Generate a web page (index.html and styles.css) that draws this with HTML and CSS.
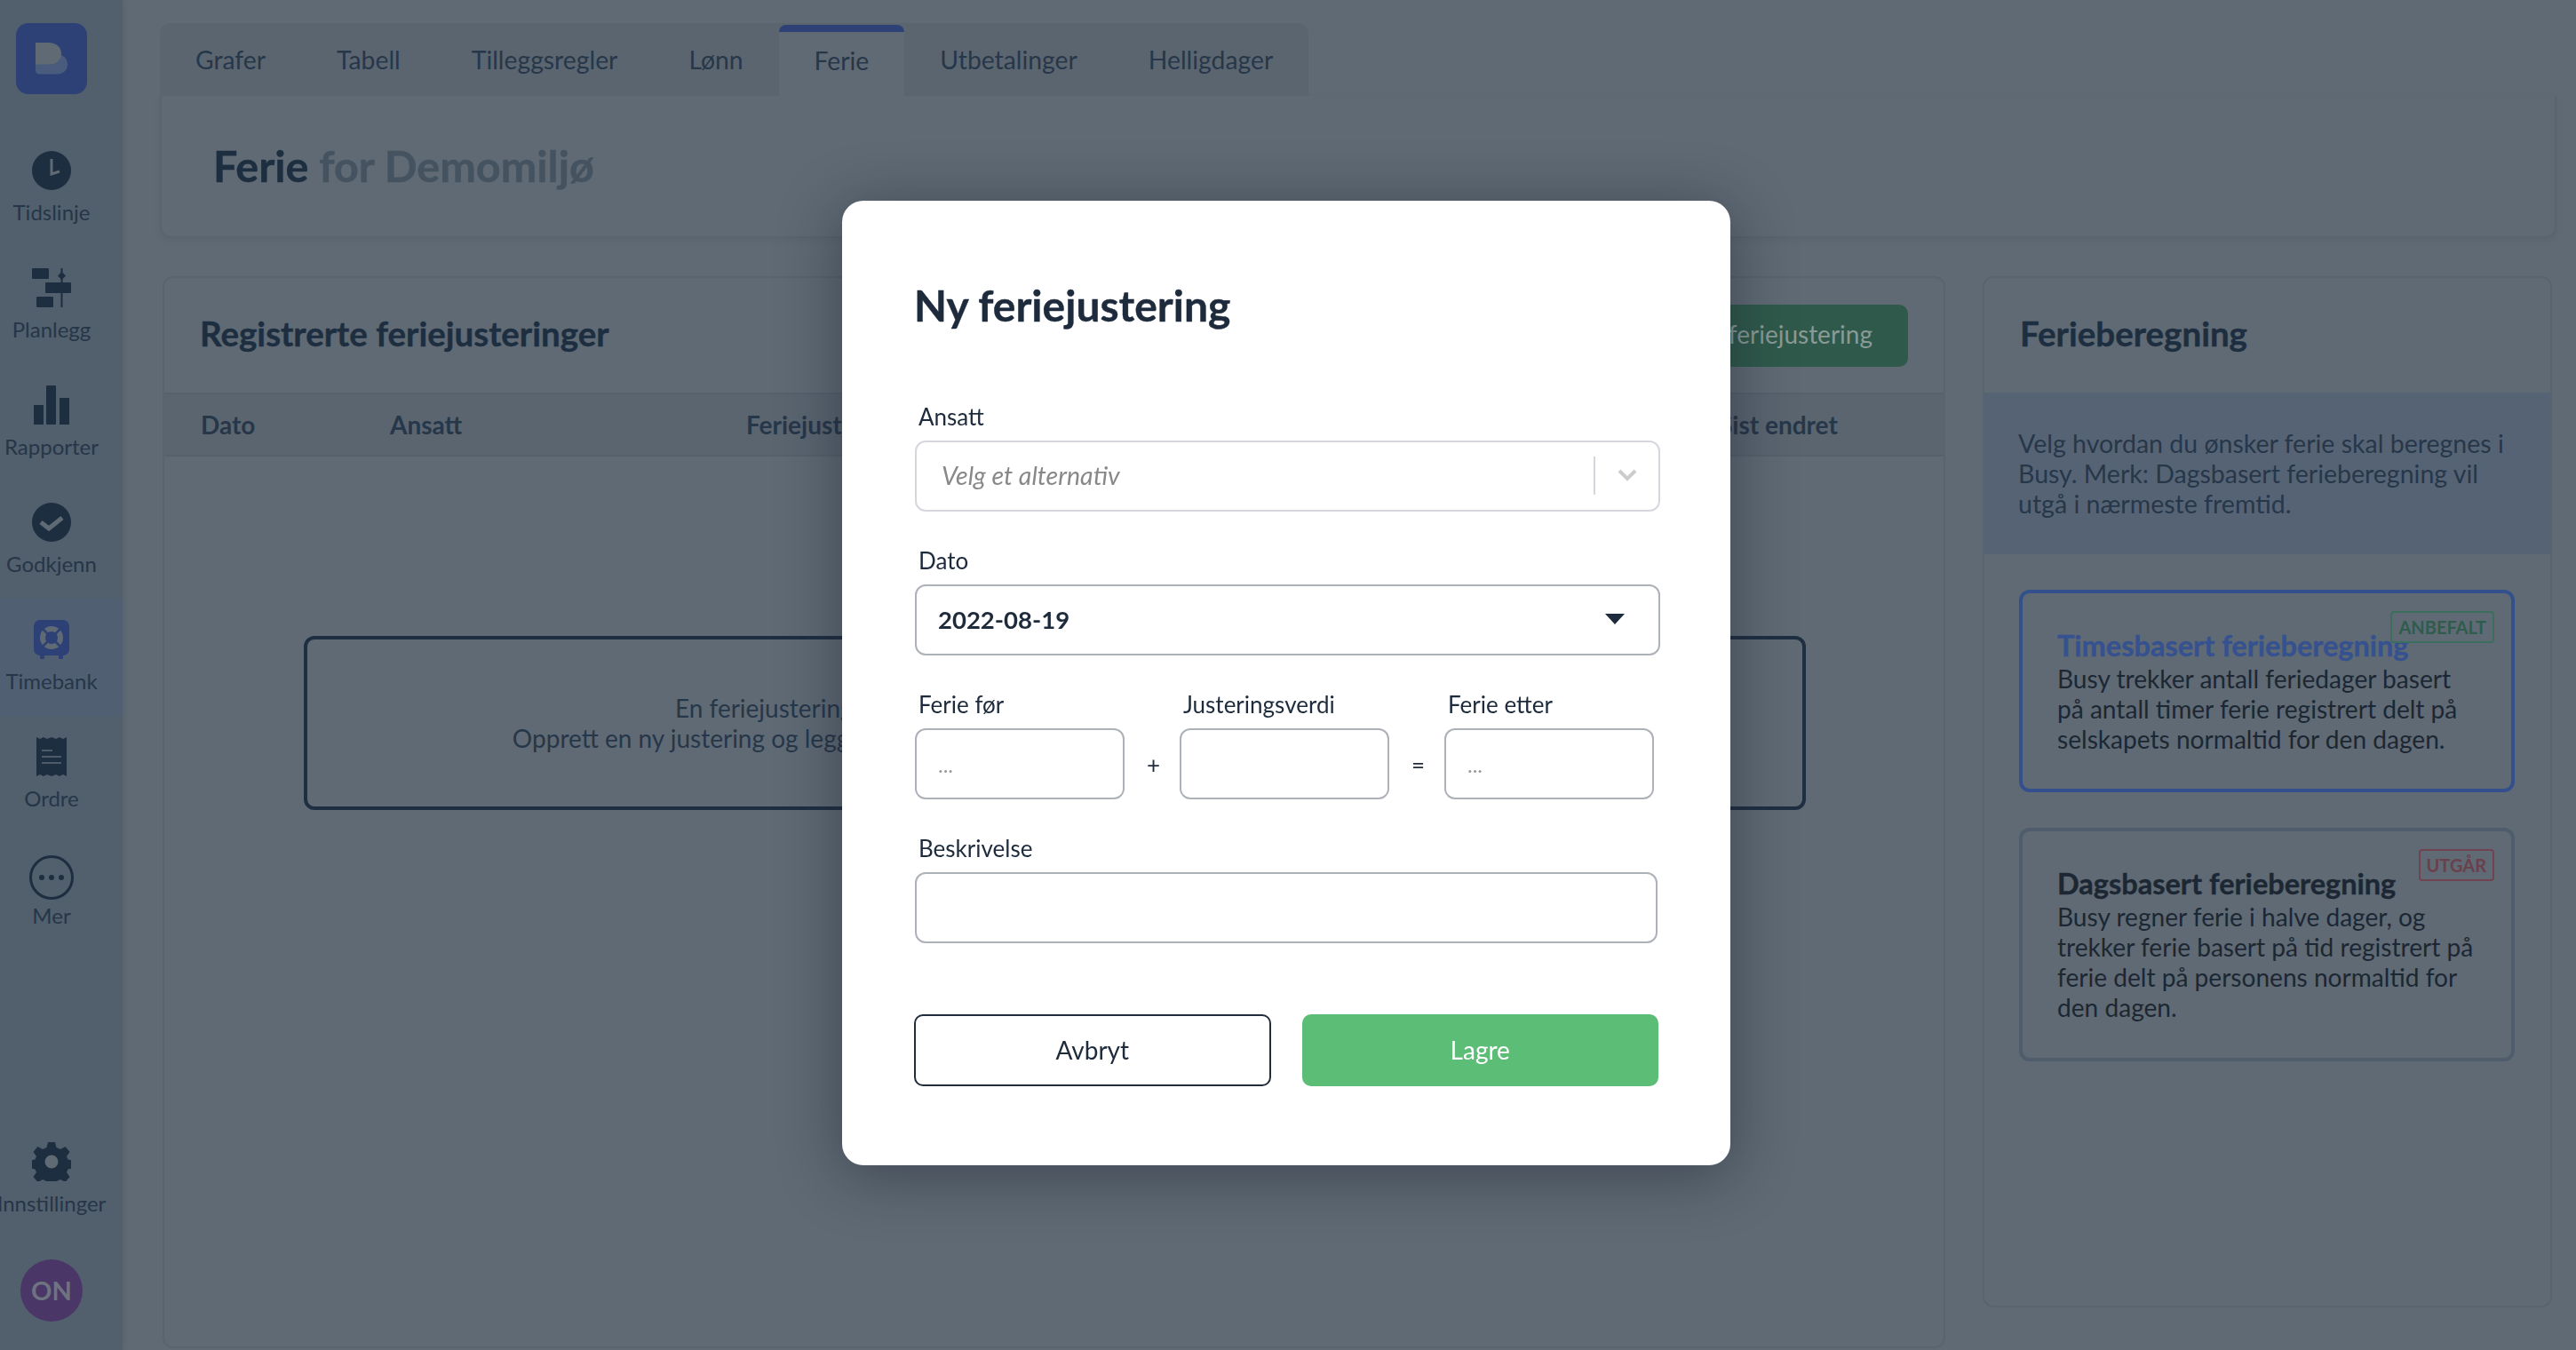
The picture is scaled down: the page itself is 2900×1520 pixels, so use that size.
FILE: index.html
```html
<!DOCTYPE html>
<html lang="en">
<head>
  <meta charset="UTF-8">
  <title>Ferie</title>
  <link rel="stylesheet" href="styles.css">
</head>
<body>
  <nav class="sidebar">
    <div class="logo">
      <svg width="36" height="36" viewBox="0 0 36 36">
        <path class="logo-back" d="M0 13h24c7 0 12 5 12 11.500S31 35.500 24 35.500H4c-2 0-4-2-4-4z"/>
        <path class="logo-front" d="M0 0h15c8 0 14 5 14 12.500S23 24.500 15 24.500H0z"/>
      </svg>
    </div>

    <a class="nav-item">
      <svg class="nav-icon" viewBox="0 0 44 44">
        <circle cx="22" cy="22" r="22" fill="#1d2e40"/>
        <path d="M22 9v17l9-3" fill="none" stroke="#5f6a74" stroke-width="3"/>
      </svg>
      <span>Tidslinje</span>
    </a>
    <a class="nav-item">
      <svg class="nav-icon" viewBox="0 0 44 44">
        <rect x="0" y="0" width="19" height="12" rx="1" fill="#1d2e40"/>
        <rect x="15" y="16" width="29" height="12" rx="1" fill="#1d2e40"/>
        <rect x="5" y="32" width="19" height="12" rx="1" fill="#1d2e40"/>
        <rect x="32.500" y="0" width="2" height="44" fill="#1d2e40"/>
        <path d="M33.500 4l4.500 4.500-4.500 4.500-4.500-4.500z" fill="#1d2e40"/>
      </svg>
      <span>Planlegg</span>
    </a>
    <a class="nav-item">
      <svg class="nav-icon" viewBox="0 0 44 44">
        <rect x="2" y="22" width="11" height="22" fill="#1d2e40"/>
        <rect x="16" y="0" width="11" height="44" rx="1" fill="#1d2e40"/>
        <rect x="31" y="14" width="11" height="30" fill="#1d2e40"/>
      </svg>
      <span>Rapporter</span>
    </a>
    <a class="nav-item">
      <svg class="nav-icon" viewBox="0 0 44 44">
        <circle cx="22" cy="22" r="22" fill="#1d2e40"/>
        <path d="M10 22l9 7 15-12" fill="none" stroke="#5f6a74" stroke-width="5"/>
      </svg>
      <span>Godkjenn</span>
    </a>
    <a class="nav-item active">
      <svg class="nav-icon" viewBox="0 0 44 44">
        <rect x="2" y="0" width="40" height="40" rx="7" fill="#2d4177"/>
        <rect x="9" y="38" width="5" height="6" rx="1" fill="#2d4177"/>
        <rect x="30" y="38" width="5" height="6" rx="1" fill="#2d4177"/>
        <circle cx="22" cy="20" r="13" fill="#5f6a74"/>
        <circle cx="22" cy="20" r="7" fill="#2d4177"/>
        <path d="M12 10l20 20M32 10L12 30" stroke="#2d4177" stroke-width="2.500"/>
      </svg>
      <span>Timebank</span>
    </a>
    <a class="nav-item">
      <svg class="nav-icon" viewBox="0 0 44 44">
        <path d="M5 0l4 2 4-2 4 2 5-2 5 2 4-2 4 2 4-2 0 44-4-2-4 2-4-2-5 2-5-2-4 2-4-2-4 2z" fill="#1d2e40"/>
        <path d="M11 15h12M11 22h22M11 29h22" stroke="#5f6a74" stroke-width="1.500"/>
      </svg>
      <span>Ordre</span>
    </a>
    <a class="nav-item nav-item-more">
      <svg class="nav-icon" viewBox="0 0 50 50">
        <circle cx="25" cy="25" r="23.500" fill="none" stroke="#1d2e40" stroke-width="3"/>
        <circle cx="14" cy="25" r="3" fill="#1d2e40"/>
        <circle cx="25" cy="25" r="3" fill="#1d2e40"/>
        <circle cx="36" cy="25" r="3" fill="#1d2e40"/>
      </svg>
      <span>Mer</span>
    </a>

    <div class="sidebar-bottom">
      <a class="nav-item">
        <svg class="nav-icon" viewBox="0 0 44 44">
          <path d="M18 0h8l1.500 6 4.500 2 5.500-3 5 6-3.500 5 1.500 3.500 5 1v9l-5 1-1.500 3.500 3.500 5-5 6-5.500-3-4.500 2-1.500 6h-8l-1.500-6-4.500-2-5.500 3-5-6 3.500-5-1.500-3.500-5-1v-9l5-1 1.500-3.500-3.500-5 5-6 5.500 3 4.500-2z" fill="#1d2e40"/>
          <circle cx="22" cy="22" r="7.500" fill="#5f6a74"/>
        </svg>
        <span>Innstillinger</span>
      </a>
      <div class="avatar">ON</div>
    </div>
  </nav>

  <main class="content">
    <div class="tabs">
      <a class="tab">Grafer</a>
      <a class="tab">Tabell</a>
      <a class="tab">Tilleggsregler</a>
      <a class="tab">Lønn</a>
      <a class="tab tab-active">Ferie</a>
      <a class="tab">Utbetalinger</a>
      <a class="tab">Helligdager</a>
    </div>

    <header class="page-head">
      <h1>Ferie <span>for Demomiljø</span></h1>
    </header>

    <div class="columns">
      <section class="card card-list">
        <div class="card-head">
          <h2>Registrerte feriejusteringer</h2>
          <button class="btn-new">Ny feriejustering</button>
        </div>
        <div class="table-head">
          <span>Dato</span>
          <span>Ansatt</span>
          <span>Feriejustering</span>
          <span>Sist endret</span>
        </div>
        <div class="empty-box">
          <p>En feriejustering lar deg korrigere feriesaldoen til en ansatt ved behov.</p>
          <p>Opprett en ny justering og legg inn verdien du vil justere saldoen med ved å trykke på knappen over.</p>
        </div>
      </section>

      <aside class="card card-calc">
        <div class="card-head">
          <h2>Ferieberegning</h2>
        </div>
        <p class="calc-intro">Velg hvordan du ønsker ferie skal beregnes i Busy. Merk: Dagsbasert ferieberegning vil utgå i nærmeste fremtid.</p>
        <div class="option option-selected">
          <span class="badge badge-green">ANBEFALT</span>
          <h3>Timesbasert ferieberegning</h3>
          <p>Busy trekker antall feriedager basert på antall timer ferie registrert delt på selskapets normaltid for den dagen.</p>
        </div>
        <div class="option">
          <span class="badge badge-red">UTGÅR</span>
          <h3>Dagsbasert ferieberegning</h3>
          <p>Busy regner ferie i halve dager, og trekker ferie basert på tid registrert på ferie delt på personens normaltid for den dagen.</p>
        </div>
      </aside>
    </div>
  </main>

  <div class="backdrop">
    <form class="modal">
      <h2>Ny feriejustering</h2>

      <div class="field">
        <label>Ansatt</label>
        <div class="control select-light">
          <span class="placeholder">Velg et alternativ</span>
          <span class="select-sep"></span>
          <svg class="chevron" width="24" height="14" viewBox="0 0 24 14">
            <path d="M3 2l9 9 9-9" fill="none" stroke="#cccccc" stroke-width="4"/>
          </svg>
        </div>
      </div>

      <div class="field">
        <label>Dato</label>
        <div class="control select-date">
          <span class="date-value">2022-08-19</span>
          <svg width="22" height="12" viewBox="0 0 22 12">
            <path d="M0 0h22L11 12z" fill="#1d2b3c"/>
          </svg>
        </div>
      </div>

      <div class="field calc-row">
        <div class="calc-col">
          <label>Ferie før</label>
          <input class="control" placeholder="...">
        </div>
        <span class="calc-op">+</span>
        <div class="calc-col">
          <label>Justeringsverdi</label>
          <input class="control">
        </div>
        <span class="calc-op">=</span>
        <div class="calc-col">
          <label>Ferie etter</label>
          <input class="control" placeholder="...">
        </div>
      </div>

      <div class="field field-wide">
        <label>Beskrivelse</label>
        <input class="control">
      </div>

      <div class="modal-actions">
        <button type="button" class="btn btn-cancel">Avbryt</button>
        <button type="button" class="btn btn-save">Lagre</button>
      </div>
    </form>
  </div>
</body>
</html>
```

FILE: styles.css
```css
* {
  margin: 0;
  padding: 0;
  box-sizing: border-box;
}

html, body {
  height: 1520px;
  overflow: hidden;
}

body {
  display: flex;
  font-family: Lato, "Open Sans", sans-serif;
  background-color: #5f6a74;
  color: #1d2e40;
}

h1, h2, h3 {
  -webkit-text-stroke: 0.4px currentColor;
}

/* Sidebar */
.sidebar {
  width: 138px;
  height: 1520px;
  flex-shrink: 0;
  display: flex;
  flex-direction: column;
  background-color: #525f6c;
  box-shadow: 2px 0 6px rgba(0, 0, 0, 0.06);
}

.logo {
  width: 80px;
  height: 80px;
  margin: 26px 0 40px 18px;
  display: flex;
  align-items: center;
  justify-content: center;
  background-color: #2d4177;
  border-radius: 14px;
}

.logo-back {
  fill: #4a5c7d;
}

.logo-front {
  fill: #5f6a74;
}

.nav-item {
  height: 132px;
  flex-shrink: 0;
  padding: 24px 22px 0 0;
  display: flex;
  flex-direction: column;
  align-items: center;
  font-size: 24px;
  color: #263648;
  white-space: nowrap;
}

.nav-item.active {
  background-color: #515f73;
}

.nav-icon {
  width: 44px;
  height: 44px;
  margin-bottom: 10px;
  flex-shrink: 0;
}

.nav-item-more .nav-icon {
  width: 50px;
  height: 50px;
  margin-top: 1px;
  margin-bottom: 3px;
}

.sidebar-bottom {
  margin-top: auto;
  padding-bottom: 32px;
  display: flex;
  flex-direction: column;
  align-items: center;
}

.sidebar-bottom .nav-item {
  width: 100%;
}

.avatar {
  width: 70px;
  height: 70px;
  margin: 24px 22px 0 0;
  padding-bottom: 2px;
  display: flex;
  align-items: center;
  justify-content: center;
  border-radius: 50%;
  background-color: #4a3768;
  color: #6d7480;
  font-size: 29px;
  font-weight: 700;
}

/* Main area */
.content {
  width: 2740px;
  padding: 26px 0 0 42px;
}

.tabs {
  display: inline-flex;
  height: 82px;
  vertical-align: top;
  background-color: #5a6570;
  border-radius: 12px 12px 0 0;
}

.tab {
  padding: 0 40px;
  display: flex;
  align-items: center;
  font-size: 28.300px;
  color: #27374a;
}

.tab-active {
  margin-top: 2px;
  padding-bottom: 8px;
  border-top: 8px solid #2d4177;
  border-radius: 8px 8px 0 0;
  background-color: #5f6a74;
}

.page-head {
  width: 2698px;
  height: 160px;
  padding: 0 0 2px 58px;
  display: flex;
  align-items: center;
  border: 2px solid #58646f;
  border-top: none;
  border-radius: 0 0 12px 12px;
  box-shadow: 0 3px 8px rgba(0, 0, 0, 0.05);
}

.page-head h1 {
  font-size: 48.500px;
  font-weight: 700;
  color: #1d2e40;
}

.page-head h1 span {
  color: #455361;
}

.columns {
  margin: 43px 0 0 3px;
  display: flex;
  align-items: flex-start;
  gap: 42px;
}

.card {
  border: 2px solid #58646f;
  border-radius: 12px;
}

.card-list {
  width: 2007px;
  height: 1207px;
}

.card-calc {
  width: 641px;
  height: 1161px;
}

.card-head {
  height: 129px;
  padding: 0 40px;
  display: flex;
  align-items: center;
  justify-content: space-between;
}

.card-head h2 {
  margin-top: -5px;
  font-size: 38.500px;
  font-weight: 700;
  color: #1d2e40;
}

.btn-new {
  width: 400px;
  height: 70px;
  padding: 0 40px 3px 0;
  text-align: right;
  border: none;
  border-radius: 10px;
  background-color: #2f5a4b;
  color: #8a9a96;
  font-family: inherit;
  font-size: 28px;
}

.table-head {
  height: 72px;
  padding-left: 41px;
  display: grid;
  grid-template-columns: 213px 401px 1095px 1fr;
  align-items: center;
  background-color: #5a6570;
  border-top: 2px solid #56616d;
  border-bottom: 2px solid #56616d;
  font-size: 28px;
  font-weight: 700;
  color: #27374a;
}

.empty-box {
  width: 1691px;
  height: 196px;
  margin: 202px 0 0 157px;
  display: flex;
  flex-direction: column;
  align-items: center;
  justify-content: center;
  border: 4px solid #1f2f42;
  border-radius: 12px;
  font-size: 28px;
  line-height: 34px;
  color: #27374a;
}

.calc-intro {
  height: 182px;
  padding: 40px 30px 0 38px;
  background-color: #566374;
  font-size: 28.500px;
  line-height: 34px;
  color: #27374a;
}

.option {
  position: relative;
  width: 558px;
  margin: 40px 0 0 39px;
  padding: 40px 36px 0 39px;
  border: 4px solid #4f5c6b;
  border-radius: 12px;
  color: #1c2733;
  font-size: 28.100px;
  line-height: 34px;
}

.option-selected {
  height: 228px;
  border-color: #34508c;
}

.option-selected h3 {
  color: #35518f;
}

.option h3 {
  font-size: 32.500px;
  line-height: 38px;
  font-weight: 700;
}

.option p {
  margin-top: 1px;
}

.option + .option {
  height: 263px;
}

.badge {
  position: absolute;
  top: 20px;
  right: 19px;
  padding: 0 7px;
  height: 36px;
  display: flex;
  align-items: center;
  border: 2px solid;
  border-radius: 4px;
  font-size: 20px;
  font-weight: 700;
}

.badge-green {
  color: #2f5c4c;
  border-color: #3b6e5c;
}

.badge-red {
  color: #6a404c;
  border-color: #6f4450;
}

/* Modal */
.backdrop {
  position: fixed;
  top: 0;
  left: 0;
  right: 0;
  bottom: 0;
  display: flex;
  justify-content: center;
  padding: 226px 4px 0 0;
}

.modal {
  width: 1000px;
  height: 1086px;
  padding: 89px 81px 0 81px;
  background-color: #fff;
  border-radius: 24px;
  box-shadow: 0 10px 70px rgba(20, 25, 40, 0.45);
  color: #1d2b3c;
}

.modal h2 {
  font-size: 48px;
  line-height: 58px;
  font-weight: 700;
  margin-bottom: 80px;
}

.field {
  margin-left: 1px;
  margin-bottom: 39px;
}

label {
  display: block;
  height: 32px;
  margin-bottom: 11px;
  padding-left: 4px;
  font-size: 26px;
  line-height: 32px;
}

.control {
  display: flex;
  align-items: center;
  width: 100%;
  height: 80px;
  padding: 0 22px 2px 24px;
  background-color: #fff;
  border: 2px solid #adb1b8;
  border-radius: 12px;
  font-family: inherit;
  font-size: 28px;
  color: #1d2b3c;
}

input.control::placeholder {
  color: #999;
  font-size: 24px;
}

.select-light {
  width: 839px;
  border-color: #d5d7dd;
}

.placeholder {
  flex: 1;
  padding-left: 4px;
  font-size: 28.500px;
  font-style: italic;
  color: #888;
}

.select-sep {
  width: 2px;
  height: 43px;
  margin-right: 24px;
  background-color: #d5d7dd;
}

.chevron {
  margin-right: 1px;
}

.select-date {
  width: 839px;
  justify-content: space-between;
  padding-right: 38px;
}

.date-value {
  font-size: 27.500px;
  font-weight: 700;
}

.calc-row {
  display: flex;
  align-items: flex-end;
}

.calc-col {
  width: 236px;
}

.calc-op {
  width: 62px;
  height: 79px;
  padding-left: 3px;
  display: flex;
  align-items: center;
  justify-content: center;
  font-size: 26px;
}

.field-wide {
  width: 836px;
}

.modal-actions {
  margin-top: 80px;
  display: flex;
  gap: 35px;
}

.btn {
  width: 402px;
  height: 81px;
  padding-bottom: 2px;
  border-radius: 10px;
  font-family: inherit;
  font-size: 28px;
}

.btn-cancel {
  background-color: #fff;
  border: 2px solid #1f2d3d;
  color: #1d2b3c;
}

.btn-save {
  background-color: #5cbd76;
  border: none;
  color: #fff;
}
```
